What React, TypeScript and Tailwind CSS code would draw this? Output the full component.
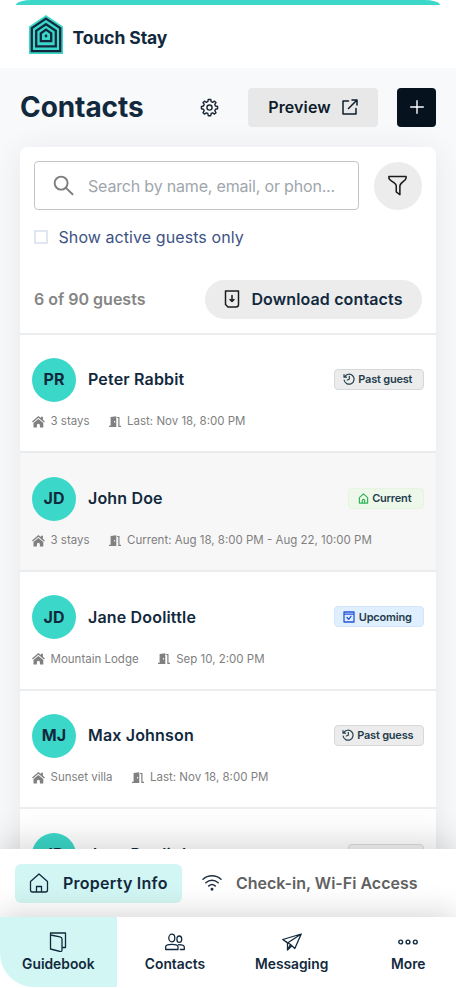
import { ReactNode } from 'react';
import clsx from 'clsx';

type TStatus = 'past' | 'current' | 'upcoming' | 'inactive';

type TGuest = {
  initials: string;
  name: string;
  status: TStatus;
  statusLabel: string;
  stay: string;
  date: string;
};

const guests: TGuest[] = [
  {
    initials: 'PR',
    name: 'Peter Rabbit',
    status: 'past',
    statusLabel: 'Past guest',
    stay: '3 stays',
    date: 'Last: Nov 18, 8:00 PM',
  },
  {
    initials: 'JD',
    name: 'John Doe',
    status: 'current',
    statusLabel: 'Current',
    stay: '3 stays',
    date: 'Current: Aug 18, 8:00 PM - Aug 22, 10:00 PM',
  },
  {
    initials: 'JD',
    name: 'Jane Doolittle',
    status: 'upcoming',
    statusLabel: 'Upcoming',
    stay: 'Mountain Lodge',
    date: 'Sep 10, 2:00 PM',
  },
  {
    initials: 'MJ',
    name: 'Max Johnson',
    status: 'past',
    statusLabel: 'Past guess',
    stay: 'Sunset villa',
    date: 'Last: Nov 18, 8:00 PM',
  },
  {
    initials: 'JD',
    name: 'Jane Doolittle',
    status: 'inactive',
    statusLabel: 'Current',
    stay: '3 stays',
    date: 'Last: Nov 18, 8:00 PM',
  },
];

const Icon = ({
  size,
  box = 24,
  stroke = 1.5,
  className = '',
  children,
}: {
  size: number;
  box?: number;
  stroke?: number;
  className?: string;
  children: ReactNode;
}) => (
  <svg
    width={size}
    height={size}
    viewBox={`0 0 ${box} ${box}`}
    fill="none"
    stroke="currentColor"
    strokeWidth={stroke}
    strokeLinejoin="round"
    strokeLinecap="round"
    className={`shrink-0 ${className}`}
  >
    {children}
  </svg>
);

const Logo = () => (
  <svg width="34" height="39" viewBox="0 0 34 39" className="shrink-0">
    <path d="M17 0 34 11.5V39H0V11.5Z" fill="#3bd8c9" />
    <g fill="none" stroke="#12293d" strokeWidth="2.3">
      <path d="M17 3.6 31.2 13V36.2H2.8V13Z" />
      <path d="M17 9.2 26.8 15.8V31.4H7.2V15.8Z" />
      <path d="M17 14.6 22.2 18.4V26.2H11.8V18.4Z" />
    </g>
    <circle cx="17" cy="21" r="1.4" fill="#12293d" />
  </svg>
);

const GearIcon = () => (
  <Icon size={19} box={20} stroke={1.5} className="text-[#1b2733]">
    <path d="M8.7 1.6h2.6l.5 2.3 1.5.6 2-1.2 1.5 1.5-1.2 2 .7 1.6 2.2.5v2.4l-2.2.5-.7 1.6 1.2 2-1.5 1.5-2-1.2-1.5.6-.5 2.3H8.7l-.5-2.3-1.5-.6-2 1.2-1.5-1.5 1.2-2-.7-1.6-2.2-.5V8.9l2.2-.5.7-1.6-1.2-2 1.5-1.5 2 1.2 1.5-.6Z" />
    <circle cx="10" cy="10.1" r="2.7" />
  </Icon>
);

const HouseSolidIcon = () => (
  <svg width="13" height="12" viewBox="0 0 13 12" className="shrink-0" fill="#808080">
    <path d="M6.4 0 8.9 2.1V.7h2v3.1l2 1.8-.9 1L6.4 1.8.9 6.6 0 5.6Z" />
    <path d="M6.4 2.9 11.3 7.1V11.6H7.9V9.2a1.5 1.5 0 0 0-3 0v2.4H1.5V7.1Z" />
  </svg>
);

const DoorIcon = () => (
  <svg width="12" height="12" viewBox="0 0 12 12" className="shrink-0" fill="#808080">
    <path
      fillRule="evenodd"
      d="M1.6 .9 7.300 .3V10.900H0V9.800H1.600ZM5.100 5V6.600H6.100V5Z"
    />
    <path d="M8.100 .9H10.500V9.800H12V10.900H9.300V2.100H8.100Z" />
  </svg>
);

const badgeStyle: Record<TStatus, string> = {
  past: 'w-[90px] bg-[#ececec] border-[#d6d9db]',
  current: 'w-[76px] bg-[#edf8ea] border-[#e6f5e1]',
  upcoming: 'w-[90px] bg-[#e0effd] border-[#cfe6fb]',
  inactive: 'w-[76px] bg-[#f4f4f4] border-[#dcdcdc]',
};

const badgeIcon: Record<TStatus, ReactNode> = {
  past: (
    <Icon size={12} box={12} stroke={1.2} className="text-[#23404f]">
      <path d="M1.7 3.7A5 5 0 1 1 1.1 7M1 1.7v2.5h2.5M6.3 3.3v3L4.2 7" />
    </Icon>
  ),
  current: (
    <Icon size={11} box={12} stroke={1.3} className="text-[#2fb457]">
      <path d="M1.5 5 6 .9 10.5 5v6h-9ZM4.7 11V8.3a1.3 1.3 0 0 1 2.6 0V11" />
    </Icon>
  ),
  upcoming: (
    <Icon size={12} box={12} stroke={1.3} className="text-[#2456d8]">
      <path d="M1 1h10v10H1ZM1.2 3.2h9.6M4 6.5l1.7 1.9L8 5.3" />
    </Icon>
  ),
  inactive: (
    <Icon size={11} box={12} stroke={1.3} className="text-[#4a4a4a]">
      <path d="M1.5 5 6 .9 10.5 5v6h-9ZM4.7 11V8.3a1.3 1.3 0 0 1 2.6 0V11" />
    </Icon>
  ),
};

const Badge = ({ status, children }: { status: TStatus; children: ReactNode }) => (
  <span
    className={clsx(
      'mb-px flex h-[21px] items-center justify-center gap-[3.5px] rounded border pr-[3px] text-[11px] font-semibold tracking-[-0.2px] whitespace-nowrap text-[#1f3d4d]',
      badgeStyle[status],
    )}
  >
    {badgeIcon[status]}
    {children}
  </span>
);

const GuestRow = ({ guest }: { guest: TGuest }) => (
  <li
    className={clsx(
      'h-[118.67px] shrink-0 border-b-2 border-[#ebeced] px-3 pt-[23.3px]',
      guest.status === 'current' && 'bg-[#f7f7f7]',
    )}
  >
    <div className="flex h-11 items-center">
      <span className="flex size-11 items-center justify-center rounded-full bg-[#3bd8c9] pb-px text-base font-bold text-[#12293d]">
        {guest.initials}
      </span>
      <h3 className="ml-3 flex-1 pb-px text-base font-semibold tracking-[0.17px] text-[#12293d]">
        {guest.name}
      </h3>
      <Badge status={guest.status}>{guest.statusLabel}</Badge>
    </div>
    <div className="mt-3 flex h-4 items-center text-[11.5px] text-[#808080]">
      <HouseSolidIcon />
      <span className="ml-[5.5px]">{guest.stay}</span>
      <span className="ml-[19.5px] flex items-center gap-[6px]">
        <DoorIcon />
        {guest.date}
      </span>
    </div>
  </li>
);

const NavItem = ({
  icon,
  label,
  active = false,
}: {
  icon: ReactNode;
  label: string;
  active?: boolean;
}) => (
  <a
    className={clsx(
      'flex flex-col items-center pt-[13px] text-[13.8px] font-semibold text-[#12293d]',
      active && 'rounded-bl-[34px] bg-[#d2f6f3]',
    )}
  >
    <span className="flex h-6 items-center">{icon}</span>
    <span className="leading-5">{label}</span>
  </a>
);

export default function App() {
  return (
    <div className="flex h-[988px] w-[456px] flex-col overflow-hidden bg-white font-['Inter',sans-serif]">
      <header className="flex h-[68px] shrink-0 flex-col">
        <div className="mx-4 h-[5px] rounded-t-[16px_5px] bg-[#3bd8c9]" />
        <div className="flex flex-1 items-start gap-[9.5px] pt-[10px] pl-[29px]">
          <Logo />
          <span className="pt-[11px] text-[17.5px] leading-6 font-bold tracking-[-0.08px] text-[#12293d]">
            Touch Stay
          </span>
        </div>
      </header>

      <main className="flex min-h-0 flex-1 flex-col overflow-hidden bg-[#f8f9fb] px-5">
        <div className="mt-[19.5px] flex h-[39px] shrink-0 items-center">
          <h1 className="flex-1 text-[28px] font-bold tracking-[-0.08px] text-[#12293d]">
            Contacts
          </h1>
          <GearIcon />
          <button className="ml-[29px] flex h-[39px] w-[130px] items-center justify-center gap-[11px] rounded bg-[#e8e8e9] text-base font-semibold tracking-[0.12px] text-[#0d1c2b]">
            Preview
            <Icon size={16} box={16} stroke={1.5}>
              <path d="M6.5 2H1v13h13V9.5M10 1h5v5M15 1 6.5 9.5" />
            </Icon>
          </button>
          <button className="ml-[19px] flex size-[39px] items-center justify-center rounded bg-[#06131f] text-white">
            <Icon size={14} box={14} stroke={1.4}>
              <path d="M7 .7v12.6M.7 7h12.6" />
            </Icon>
          </button>
        </div>

        <section className="mt-[20.5px] flex shrink-0 flex-col rounded-t-lg bg-white shadow-[0_4px_30px_rgba(30,50,70,0.09)]">
          <div className="flex items-center justify-between px-3.5 pt-3.5">
            <div className="flex h-[49px] w-[325px] items-center rounded border border-[#c3c5c8] pl-[18px]">
              <Icon size={21} box={22} stroke={2} className="text-[#7d7d7d]">
                <circle cx="8.5" cy="8.5" r="6.8" />
                <path d="m13.5 13.5 7 6.7" />
              </Icon>
              <span className="ml-[14px] text-base tracking-[-0.18px] text-[#a0a6ad]">
                Search by name, email, or phon...
              </span>
            </div>
            <button className="flex size-[48px] items-center justify-center rounded-full bg-[#ececec] pr-px pb-px text-[#1c1c1c]">
              <Icon size={21} box={22} stroke={1.6}>
                <path d="M2 1.5h18v1.7c0 3-6.5 4.8-6.5 8.3v9.2l-3.8-3v-6.2C9.7 8 2 6.2 2 3.2Z" />
              </Icon>
            </button>
          </div>

          <label className="mt-[15px] flex h-6 items-center gap-[10.5px] pl-3.5 text-base tracking-[0.08px] text-[#3d5285]">
            <span className="size-[14px] border-2 border-[#dfe5f1]" />
            <span className="pb-px">Show active guests only</span>
          </label>

          <div className="mt-[31px] flex h-[39px] items-center justify-between px-3.5">
            <span className="pb-px text-base font-semibold text-[#858585]">
              6 of 90 guests
            </span>
            <button className="flex h-[39px] w-[217px] items-center justify-center gap-[10px] rounded-full bg-[#ececec] pr-px pb-px text-base font-semibold tracking-[0.13px] text-[#12293d]">
              <Icon size={18} box={18} stroke={1.5} className="text-[#1c1c1c]">
                <path d="M2.5 1h13v13.5q0 2.5-2.5 2.5H5L2.5 14.5ZM9 5.5v6M7 9.5l2 2 2-2" />
              </Icon>
              Download contacts
            </button>
          </div>

          <ul className="mt-[13.7px] flex flex-col border-t-2 border-[#ebeced]">
            {guests.map((guest, index) => (
              <GuestRow key={index} guest={guest} />
            ))}
          </ul>
        </section>
      </main>

      <div className="relative flex h-[68px] shrink-0 items-center bg-white pl-[15px] text-base font-semibold shadow-[0_-4px_36px_rgba(0,0,0,0.18)]">
        <a className="flex h-[39px] w-[167px] items-center rounded-md bg-[#d2f6f3] pl-[14px] text-[#12293d]">
          <Icon size={20} box={20} stroke={1.3}>
            <path d="M1.5 8.5 10 1l8.5 7.5v8.5q0 2-2 2h-13q-2 0-2-2ZM7.5 19v-5.500h5V19" />
          </Icon>
          <span className="ml-[14px] tracking-[0.25px]">Property Info</span>
        </a>
        <a className="ml-5 flex items-center text-[#616161]">
          <Icon size={20} box={20} stroke={1.5} className="text-[#1f3040]">
            <path d="M1 6.2C6.2 1.5 13.8 1.5 19 6.2M3.8 9.7c3.7-3.3 8.7-3.3 12.4 0M6.8 12.9c2-1.7 4.4-1.7 6.4 0" />
            <circle cx="10" cy="16.2" r=".7" fill="currentColor" />
          </Icon>
          <span className="ml-[14px]">Check-in, Wi-Fi Access</span>
        </a>
      </div>

      <nav className="relative grid h-[71px] shrink-0 grid-cols-[repeat(4,116.67px)] bg-white pb-px shadow-[0_-4px_30px_rgba(0,0,0,0.16)]">
        <NavItem
          active
          label="Guidebook"
          icon={
            <Icon size={20} box={20} stroke={1.3}>
              <path d="M2.5 1h15v14.5h-3M2.5 1v16l9.5 2.5q2 .3 2-1.5V7q0-1.8-2-2.2L2.5 3" />
            </Icon>
          }
        />
        <NavItem
          label="Contacts"
          icon={
            <Icon size={20} box={20} stroke={1.3}>
              <ellipse cx="6.8" cy="6" rx="3" ry="3.8" />
              <ellipse cx="14.3" cy="7.2" rx="2.4" ry="3.2" />
              <path d="M.7 17.5v-2.7c0-3.3 12.3-3.3 12.3 0v2.7ZM13.5 12.7c3 0 5.8.8 5.8 2.6v2.2h-4" />
            </Icon>
          }
        />
        <NavItem
          label="Messaging"
          icon={
            <Icon size={20} box={20} stroke={1.3}>
              <path d="M.8 7.5 19.2 2 12.8 16.5 8.5 12.5ZM19.2 2 5.5 11v7l3-5.5M5.5 18l3.8-3.7M.8 7.5 5.5 11" />
            </Icon>
          }
        />
        <NavItem
          label="More"
          icon={
            <Icon size={20} box={20} stroke={1.4}>
              <circle cx="2.7" cy="10" r="1.9" />
              <circle cx="10" cy="10" r="1.9" />
              <circle cx="17.3" cy="10" r="1.9" />
            </Icon>
          }
        />
      </nav>
    </div>
  );
}
